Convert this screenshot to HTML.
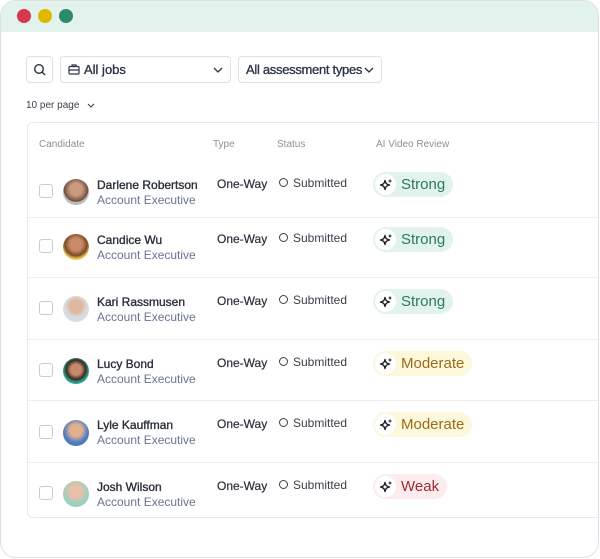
<!DOCTYPE html>
<html><head><meta charset="utf-8"><style>
*{margin:0;padding:0;box-sizing:border-box}
body{width:600px;height:559px;background:#fff;font-family:"Liberation Sans",sans-serif;overflow:hidden;position:relative}
.win{position:absolute;left:0;top:0;width:599px;height:558px;border:1px solid #dcdfe3;border-radius:16px;overflow:hidden;background:#fff}
.bar{height:31px;background:#e1f3ec}
.dot{position:absolute;top:8px;width:14px;height:14px;border-radius:50%}
.box{position:absolute;top:55px;height:27px;border:1px solid #dde0e5;border-radius:4px;display:flex;align-items:center;font-size:13px;color:#2a3346;-webkit-text-stroke:0.3px #2a3346}
.card{position:absolute;left:26px;top:121px;width:600px;height:396px;border:1px solid #e7e9ec;border-radius:6px}
.hd{position:absolute;top:138px;font-size:10px;color:#8a909a}
.row{position:absolute;left:26px;width:580px;border-bottom:1px solid #eceef0}
.cb{position:absolute;left:38px;width:14px;height:14px;border:1px solid #c9ccd3;border-radius:3px}
.av{position:absolute;left:62px;width:26px;height:26px;border-radius:50%}
.nm{position:absolute;left:96px;font-size:12px;color:#2a2f3a;-webkit-text-stroke:0.35px #2a2f3a}
.jb{position:absolute;left:96px;font-size:12px;color:#6b7393}
.ty{position:absolute;left:216px;font-size:12px;color:#2a2f3a;-webkit-text-stroke:0.2px #2a2f3a}
.st{position:absolute;left:278px;font-size:12px;color:#3a3f4a}
.st:before{content:"";display:inline-block;width:7px;height:7px;border:1.3px solid #3a3f4a;border-radius:50%;margin-right:5px;vertical-align:0px}
.bd{position:absolute;left:372px;height:25px;border-radius:13px;display:flex;align-items:center;padding-right:8px;font-size:15px}
.bd i{width:21px;height:21px;border-radius:50%;background:#fff;margin:0 5px 0 2px;display:flex;align-items:center;justify-content:center}
.g{background:#e1f3ec;color:#2a7a5c}.y{background:#fdf7dc;color:#9a6d1b}.r{background:#fdeced;color:#9a2a35}
</style></head><body>
<div class="win">
<div class="bar"></div>
<div class="dot" style="left:16px;background:#d8374f"></div>
<div class="dot" style="left:37px;background:#e0b800"></div>
<div class="dot" style="left:58px;background:#2a8a6a"></div>
<div class="box" style="left:25px;width:27px;justify-content:center"><svg width="14" height="14" viewBox="0 0 14 14"><circle cx="6" cy="6" r="4.3" fill="none" stroke="#2a3346" stroke-width="1.4"/><path d="M9.2 9.2L12 12" stroke="#2a3346" stroke-width="1.4"/></svg></div>
<div class="box" style="left:59px;width:171px;padding-left:7px"><svg width="12" height="11" viewBox="0 0 12 11" style="margin-right:4px"><rect x="1" y="2.5" width="10" height="7.5" rx="1" fill="none" stroke="#2a3346" stroke-width="1.2"/><path d="M4 2.5V1h4v1.5M1 6h10" stroke="#2a3346" stroke-width="1.2" fill="none"/></svg>All jobs<svg style="position:absolute;right:7px" width="10" height="6"><path d="M1 1l4 4 4-4" fill="none" stroke="#2a3346" stroke-width="1.3"/></svg></div>
<div class="box" style="left:237px;width:144px;padding-left:7px;letter-spacing:-0.3px">All assessment types<svg style="position:absolute;right:7px" width="10" height="6"><path d="M1 1l4 4 4-4" fill="none" stroke="#2a3346" stroke-width="1.3"/></svg></div>
<div style="position:absolute;left:25px;top:99px;font-size:10px;color:#3a3f4a">10 per page <svg width="8" height="5" style="margin-left:5px"><path d="M1 1l3 3 3-3" fill="none" stroke="#3a3f4a" stroke-width="1.1"/></svg></div>
<div class="card"></div>
<div class="hd" style="left:38px">Candidate</div><div class="hd" style="left:212px">Type</div><div class="hd" style="left:276px">Status</div><div class="hd" style="left:375px">AI Video Review</div>

<div class="row" style="top:160px;height:57px"></div>
<div class="row" style="top:217px;height:60px"></div>
<div class="row" style="top:277px;height:62px"></div>
<div class="row" style="top:339px;height:61px"></div>
<div class="row" style="top:400px;height:62px"></div>

<svg width="0" height="0" style="position:absolute"><defs><g id="sp"><path d="M6 1.5C6.6 4.5 7.5 5.4 10.5 6 7.5 6.6 6.6 7.5 6 10.5 5.4 7.5 4.5 6.6 1.5 6 4.5 5.4 5.4 4.5 6 1.5Z" fill="none" stroke="#1a1d24" stroke-width="1.4" stroke-linejoin="round"/><path d="M11 0.5v3M9.5 2h3" stroke="#1a1d24" stroke-width="1.1"/></g></defs></svg>

<div class="cb" style="top:183px"></div><div class="av" style="top:178px;background:radial-gradient(circle at 50% 40%,#c99a80 30%,#6b4a3a 60%,#bbb 62%)"></div>
<div class="nm" style="top:177px">Darlene Robertson</div><div class="jb" style="top:192px">Account Executive</div>
<div class="ty" style="top:176px">One-Way</div><div class="st" style="top:175px">Submitted</div>
<div class="bd g" style="top:171px"><i><svg width="14" height="12"><use href="#sp"/></svg></i>Strong</div>

<div class="cb" style="top:238px"></div><div class="av" style="top:233px;background:radial-gradient(circle at 50% 40%,#c98a6a 30%,#7a4a2a 55%,#e8c84a 70%)"></div>
<div class="nm" style="top:232px">Candice Wu</div><div class="jb" style="top:247px">Account Executive</div>
<div class="ty" style="top:231px">One-Way</div><div class="st" style="top:230px">Submitted</div>
<div class="bd g" style="top:226px"><i><svg width="14" height="12"><use href="#sp"/></svg></i>Strong</div>

<div class="cb" style="top:300px"></div><div class="av" style="top:295px;background:radial-gradient(circle at 50% 40%,#e0b8a0 30%,#d8dde2 55%)"></div>
<div class="nm" style="top:294px">Kari Rassmusen</div><div class="jb" style="top:309px">Account Executive</div>
<div class="ty" style="top:293px">One-Way</div><div class="st" style="top:292px">Submitted</div>
<div class="bd g" style="top:288px"><i><svg width="14" height="12"><use href="#sp"/></svg></i>Strong</div>

<div class="cb" style="top:362px"></div><div class="av" style="top:357px;background:radial-gradient(circle at 50% 45%,#c58a6a 28%,#3a2a22 50%,#2aa38a 65%)"></div>
<div class="nm" style="top:356px">Lucy Bond</div><div class="jb" style="top:371px">Account Executive</div>
<div class="ty" style="top:355px">One-Way</div><div class="st" style="top:354px">Submitted</div>
<div class="bd y" style="top:350px"><i><svg width="14" height="12"><use href="#sp"/></svg></i>Moderate</div>

<div class="cb" style="top:424px"></div><div class="av" style="top:419px;background:radial-gradient(circle at 50% 40%,#e0b090 30%,#4a7ac0 60%)"></div>
<div class="nm" style="top:417px">Lyle Kauffman</div><div class="jb" style="top:432px">Account Executive</div>
<div class="ty" style="top:416px">One-Way</div><div class="st" style="top:415px">Submitted</div>
<div class="bd y" style="top:411px"><i><svg width="14" height="12"><use href="#sp"/></svg></i>Moderate</div>

<div class="cb" style="top:485px"></div><div class="av" style="top:480px;background:radial-gradient(circle at 50% 40%,#e8c0a8 30%,#9ad0c0 60%)"></div>
<div class="nm" style="top:479px">Josh Wilson</div><div class="jb" style="top:494px">Account Executive</div>
<div class="ty" style="top:478px">One-Way</div><div class="st" style="top:477px">Submitted</div>
<div class="bd r" style="top:473px"><i><svg width="14" height="12"><use href="#sp"/></svg></i>Weak</div>
</div>
</body></html>
